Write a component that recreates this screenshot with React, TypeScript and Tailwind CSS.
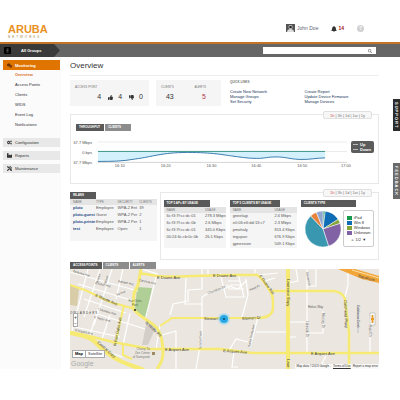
import { FaBell, FaCogs, FaComments, FaIndustry, FaSearch, FaThumbsDown, FaThumbsUp, FaTools } from 'react-icons/fa';

const mainLinks = ['Overview', 'Access Points', 'Clients', 'WIDS', 'Event Log', 'Notifications'];

const sections = [
  { name: 'Configuration', icon: <FaCogs size={5} /> },
  { name: 'Reports', icon: <FaIndustry size={5} /> },
  { name: 'Maintenance', icon: <FaTools size={5} /> },
];

const quickLinks = [
  ['Create New Network', 'Manage Groups', 'Set Security'],
  ['Create Report', 'Update Device Firmware', 'Manage Devices'],
];

const wlans = [
  ['pluto', 'Employee', 'WPA-2 Ent', '39'],
  ['pluto-guest', 'Guest', 'WPA-2 Per', '2'],
  ['pluto-printe', 'Employee', 'WPA-2 Per', '1'],
  ['test', 'Employee', 'Open', '1'],
];

const topAps = [
  ['6c:f3:7f:cc:dc:01', '278.3 Mbps'],
  ['6c:f3:7f:cc:dc:0b', '2.6 Mbps'],
  ['6c:f3:7f:cc:dc:01', '345.0 Kbps'],
  ['00:24:6c:cb:0c:0b', '26.1 Kbps'],
];

const topClients = [
  ['gneelagi', '2.6 Mbps'],
  ['e0:06:e6:dd:13:c7', '2.3 Mbps'],
  ['pmohaly', '813.4 Kbps'],
  ['tngupari', '676.9 Kbps'],
  ['gpnession', '509.1 Kbps'],
];

const slices = [
  { color: '#2f9d68', value: 2 },
  { color: '#0f6db5', value: 14 },
  { color: '#86a53c', value: 4 },
  { color: '#8162a5', value: 25 },
  { color: '#3a97b0', value: 43 },
  { color: '#e8823a', value: 6 },
  { color: '#8fa6cf', value: 6 },
];

const legend = [
  { name: 'iPad', swatch: 'bg-[#159a50]' },
  { name: 'Win 8', swatch: 'bg-[#0f6db5]' },
  { name: 'Windows', swatch: 'bg-[#86a53c]' },
  { name: 'Unknown', swatch: 'bg-[#8162a5]' },
];

function RangePicker() {
  return (
    <div className="absolute -top-1 right-1.5 flex h-2 items-center gap-px rounded-xs border border-[#e0e0e0] bg-[#f7f7f7] px-1.5 leading-[5px] text-[#777]">
      <button className="text-[#c55]">1h</button>|<button>3h</button>|<button>1d</button>|<button>1w</button>|<button>1y</button>
    </div>
  );
}

function Tabs({ items }: { items: string[] }) {
  return (
    <div className="flex gap-px text-[3px] leading-[7px] font-bold text-white">
      {items.map((item, i) => (
        <button key={item} className={`h-[7px] min-w-[26px] pr-1 pl-[3px] text-left ${i === 0 ? 'bg-[#595959]' : 'bg-[#8c8c8c]'}`}>
          {item}
        </button>
      ))}
    </div>
  );
}

function UsageTable({ title, rows }: { title: string; rows: string[][] }) {
  return (
    <div className="min-w-0 bg-[#f5f5f5]">
      <div className="bg-white">
        <h3 className="h-[7px] w-3/4 bg-[#595959] pl-[3px] text-[3px] leading-[7px] font-bold whitespace-nowrap text-white">{title}</h3>
      </div>
      <table className="w-full table-fixed text-left leading-[6px] whitespace-nowrap text-[#555]">
        <thead className="bg-[#e4e4e4] text-[3px] text-[#777]">
          <tr>
            <th className="w-2/3 pl-[3px] font-normal">NAME</th>
            <th className="font-normal">USAGE</th>
          </tr>
        </thead>
        <tbody>
          {rows.map((row, i) => (
            <tr key={i} className="h-[7px]">
              <td className="pl-[3px]">{row[0]}</td>
              <td>{row[1]}</td>
            </tr>
          ))}
        </tbody>
      </table>
    </div>
  );
}

function Throughput() {
  return (
    <svg viewBox="0 0 280 34" className="block min-w-0 flex-1" fontFamily="Liberation Sans" fontSize="4" fill="#555">
      <path d="M26 6H276M26 15.500H276" stroke="#e6e6e6" strokeWidth="0.8" />
      <path d="M26 26.500H276" stroke="#ccc" strokeWidth="0.8" />
      <path d="M26 15.500H254V22C245 22 238 24 228 23.500S214 21 205 21S194 22.500 185 22.500S168 21 160 20S128 16.500 116 16.500C90 16.500 80 21 64 23C50 25.500 40 25.500 26 25.500Z" fill="#d3f1fc" />
      <path d="M26 25.500C40 25.500 50 25.500 64 23C80 21 90 16.500 116 16.500S152 19 160 20S176 22.500 185 22.500S196 21 205 21S218 23 228 23.500S245 22 254 22" fill="none" stroke="#2b70a4" strokeWidth="0.9" />
      <path d="M26 15.500H254" stroke="#2f8d7d" strokeWidth="0.9" />
      <g textAnchor="end">
        <text x="20" y="8">67.7 Mbps</text>
        <text x="20" y="18">0 bps</text>
        <text x="20" y="28">67.7 Mbps</text>
      </g>
      <g textAnchor="middle">
        <text x="48" y="31">16:10</text>
        <text x="94" y="31">16:20</text>
        <text x="140" y="31">16:30</text>
        <text x="185" y="31">16:40</text>
        <text x="231" y="31">16:50</text>
        <text x="275" y="31">17:00</text>
      </g>
    </svg>
  );
}

function Pie() {
  let start = 0;
  return (
    <svg viewBox="-19 -19 38 38" className="size-[38px] shrink-0">
      {slices.map((s, i) => {
        const a = (start / 100) * Math.PI * 2;
        start += s.value;
        const b = (start / 100) * Math.PI * 2;
        const d = `M0 0L${18 * Math.sin(a)} ${-18 * Math.cos(a)}A18 18 0 0 1 ${18 * Math.sin(b)} ${-18 * Math.cos(b)}Z`;
        return <path key={i} d={d} fill={s.color} stroke="#fff" strokeWidth="0.5" />;
      })}
    </svg>
  );
}

function StreetMap() {
  return (
    <svg viewBox="0 0 309 100" className="block w-full bg-[#ebe7e0]" fontFamily="Liberation Sans" fontSize="3" fill="#555">
      <path d="M0 16L9 20L7 37L0 36Z" fill="#d8cda6" />
      <path d="M67 18L82 19L77 46L75 51L65 41Z" fill="#b0cf96" />
      <path d="M77 51L86 58L78 76H72Z" fill="#d3cec7" />
      {/* side streets */}
      <g fill="none" stroke="#fff" strokeWidth="1.2">
        <path d="M0 3L68 22M8 15L64 32M14 30L56 44M18 42L75 60M5 58L50 68M18 0L2 62M30 0L14 48M42 0L24 56M53 0L46 30M28 40L20 66M40 46L32 70M60 44L53 76" />
        <path d="M72 0L87 5L75 51M90 56L86 80M100 46L103 35L118 32V21L132 20V0M116 8L115 35H132V28L142 22L160 18M132 28V66L126 100M138 8V0M92 66L106 62M106 62V100M53 88L40 84" />
        <path d="M156 16L168 20L176 12M150 4L156 28H174L168 5M158 12H170M160 16H172M158 20H174M176 10L178 26L172 48M188 6L208 4M195 12L205 9M185 0V4M188 48L180 78M186 63H219M160 80L166 70L178 73M164 82L162 98H168" />
        <path d="M219 53H237M219 68H226M237 0V83M237 17H246V0M237 64H253V42M218 14L228 12L226 0M275 28L278 16V0M300 48V83M256 87L250 98" />
      </g>
      <path d="M288 36V64" stroke="#b9bfd0" strokeWidth="1" />
      {/* main roads */}
      <g fill="none" stroke="#f6ea72">
        <path d="M71 0L68 16L64 24L63 39C66 46 80 52 87 59C92 66 93 74 93 84C93 90 90 96 87 100" strokeWidth="3" />
        <path d="M69 4L87 7C110 9 135 6 160 6L187 6C192 8 196 16 200 22C203 26 203 30 203 38C203 46 198 48 190 49" strokeWidth="2.500" />
        <path d="M202 22H263C269 22 274 26 275 30L279 63V100" strokeWidth="2.500" />
        <path d="M190 49L150 49L102 49L90 57" strokeWidth="2" />
        <path d="M0 16L15 21L40 33L58 38L64 40M54 36L45 76M53 76V86L62 90" strokeWidth="2" />
        <path d="M0 63L23 68L43 73L80 80L150 80L183 84H309" strokeWidth="2.500" />
        <path d="M218 0V100" strokeWidth="4" />
        <path d="M0 64C14 67 22 68 28 76C36 84 48 92 60 96L74 101" strokeWidth="4" />
      </g>
      <path d="M268 0H285L309 7V14L292 10Z" fill="#f2a63a" />
      <path d="M282 1L309 9" stroke="#fbe0a8" strokeWidth="1" />
      <g fill="#444" fontSize="4">
        <text transform="translate(25 27) rotate(24)">E Maude Ave</text>
        <text transform="translate(46 77) rotate(-79)">N Fair Oaks Ave</text>
        <text transform="translate(75 54) rotate(43)">N Wolfe Rd</text>
        <text transform="translate(27 74) rotate(41)">Central Expy</text>
        <text x="87" y="10">E Duane Ave</text>
        <text x="143" y="8">E Duane Ave</text>
        <text transform="translate(189 7) rotate(54)">E Duane Ave</text>
        <text x="134" y="51">Stewart Dr</text>
        <text transform="translate(172 51) rotate(-4)">Stewart Dr</text>
        <text x="95" y="82">E Arques Ave</text>
        <text transform="translate(153 83) rotate(4)">E Arques Ave</text>
        <text x="241" y="86">E Arques Ave</text>
        <text transform="translate(217 10) rotate(90)">Lawrence Expy</text>
        <text transform="translate(217 90) rotate(90)">Lawr</text>
        <text transform="translate(274 31) rotate(88)">Oakmead Pkwy</text>
        <text transform="translate(288 8) rotate(15)">Bayshore</text>
        <text x="0" y="45" fontSize="3" letterSpacing="1">OWLANDERS</text>
      </g>
      <g fill="#555">
        <text transform="translate(3 3) rotate(16)">Bellevue Ave</text>
        <text transform="translate(25 15) rotate(12)">E Arbor Ave</text>
        <text transform="translate(28 41) rotate(16)">Columbia Ave</text>
        <text transform="translate(24 49) rotate(14)">E Taylor Ave</text>
        <text transform="translate(5 62) rotate(12)">E Arques Ave</text>
        <text transform="translate(48 13) rotate(12)">Balsam Ave</text>
        <text transform="translate(69 12) rotate(12)">Carolina Ave</text>
        <text transform="translate(47 27) rotate(-24)">Fir Ave</text>
        <text transform="translate(28 14) rotate(-74)">Worley</text>
        <text transform="translate(36 15) rotate(-74)">Morse</text>
        <text transform="translate(138 25) rotate(-20)">Champlain Dr</text>
        <text transform="translate(180 22) rotate(-24)">Reed Pl</text>
        <text transform="translate(131 80) rotate(-88)">Sonora Court</text>
        <text transform="translate(180 78) rotate(-78)">Santa Trinita Ave</text>
        <text x="238" y="39">Helius Way</text>
        <text transform="translate(236 52) rotate(90)">Lakeside Dr</text>
        <text transform="translate(252 44) rotate(90)">Mercury Dr</text>
        <text transform="translate(236 3) rotate(80)">Stewart Dr</text>
        <text transform="translate(287 36) rotate(90)">Calabazas Creek</text>
        <text transform="translate(299 56) rotate(90)">Hazel Dr</text>
        <g fill="#4d6b45" textAnchor="middle">
          <text x="65" y="33">Fair Oaks</text>
          <text x="65" y="37">Park</text>
        </g>
        <g fill="#777" textAnchor="end">
          <text x="80" y="81">Chung Tai</text>
          <text x="80" y="85">Zen Center</text>
          <text x="80" y="89">of Sunnyvale</text>
        </g>
      </g>
      <circle cx="65" cy="41" r="1" fill="#222" />
      <path d="M82 83h3v3h-3z" fill="#a08a60" />
      <circle cx="154" cy="50" r="6" fill="#8cd5f5" opacity="0.6" />
      <circle cx="154" cy="50" r="4" fill="#27a8e5" />
      <circle cx="154" cy="50" r="1" fill="#0b4a6e" />
      <path d="M300 44h5v12h-5z" fill="#fff" stroke="#999" strokeWidth="0.5" />
      <path d="M302.500 46v3M301 50h3M302.500 50v4" stroke="#e59b23" strokeWidth="1.800" />
    </svg>
  );
}

export default function App() {
  return (
    <div className="relative bg-white pb-7 font-['Liberation_Sans',Arial,sans-serif] text-[4px] leading-[5px] text-[#333]">
      <header className="flex h-[42px] items-start justify-between pt-6 pr-9 pl-2">
        <div>
          <div className="text-[11px] leading-[11px] font-bold text-[#e8921f]">ARUBA</div>
          <div className="text-[3px] leading-[4px] tracking-[2px] text-[#a8793c]">NETWORKS</div>
        </div>
        <div className="flex items-center gap-[13px]">
          <span className="flex items-center gap-0.5 text-[5px] text-[#667]">
            <svg viewBox="0 0 9 9" className="size-[9px]">
              <path d="M0 0h9v8H0z" fill="#555" />
              <circle cx="4.5" cy="3" r="2" fill="#ddd" />
              <path d="M1 8c0-4 7-4 7 0z" fill="#ddd" />
              <circle cx="4.5" cy="3" r="1.300" fill="#222" />
            </svg>
            John Doe
          </span>
          <span className="flex items-center gap-px text-[5px] font-bold text-[#a01515]"><FaBell size={6} color="#333" />14</span>
          <button aria-label="Help" className="size-[7px] rounded-full bg-[#d0d0d0] text-[5px] leading-[7px] font-bold text-white">?</button>
        </div>
      </header>

      <div className="flex h-[15px] items-center justify-between border-t-2 border-[#c47425] bg-[#666] pr-6">
        <button className="flex h-full w-[60px] items-center gap-2.5 bg-[#3a3a3a] pl-1 font-bold text-white [clip-path:polygon(0_0,90%_0,100%_50%,90%_100%,0_100%)]">
          <svg viewBox="0 0 7 7" className="size-[7px]">
            <rect width="7" height="7" rx="1" fill="#000" />
            <path d="M2.500 2h2M2.500 3.500h2M2.500 5h2" stroke="#999" strokeWidth="0.6" />
          </svg>
          All Groups
        </button>
        <div className="flex h-[7px] w-[30%] items-center bg-white pr-1">
          <input aria-label="Search" className="h-full min-w-0 flex-1 outline-none" />
          <FaSearch size={4} color="#777" />
        </div>
      </div>

      <div className="flex">
        <nav className="w-[61px] shrink-0 bg-[#fbfbfb] pt-[3px] pr-px pl-[3px]">
          <a href="#" className="flex h-[10px] items-center gap-[3px] bg-[#df7400] pl-1 font-bold text-white"><FaComments size={5} color="#6b3300" />Monitoring</a>
          <ul className="mb-2">
            {mainLinks.map((link, i) => (
              <li key={link} className="h-[10px] pl-3 leading-[10px]"><a href="#" className={i === 0 ? 'font-bold text-[#d9702c]' : ''}>{link}</a></li>
            ))}
          </ul>
          {sections.map((s) => (
            <a key={s.name} href="#" className="mb-1 flex h-[9px] items-center gap-[3px] bg-[#e8e8e8] pl-1">{s.icon}{s.name}</a>
          ))}
        </nav>

        <main className="min-w-0 flex-1 pr-[21px] pl-[9px]">
          <h1 className="mt-[3px] h-4 border-b border-[#eee] text-[8px] leading-[11px] text-[#333]">Overview</h1>

          <section className="mt-1 flex h-[26px]">
            <div className="w-[79px] bg-[#f5f5f5] px-[5px] pt-[5px]">
              <div className="text-[3px] leading-[5px] text-[#777]">ACCESS POINT</div>
              <div className="flex items-center justify-end gap-[7px] pt-[3px] pr-px text-[7px] leading-[8px]">
                <span>4</span>
                <span className="flex items-center gap-[5px]"><FaThumbsUp size={5} />4</span>
                <span className="flex items-center gap-[5px]"><FaThumbsDown size={5} />0</span>
              </div>
            </div>
            <div className="ml-[7px] flex w-[65px] justify-between bg-[#f5f5f5] pt-[5px] pr-[15px] pl-[5px]">
              <div>
                <div className="text-[3px] leading-[5px] text-[#777]">CLIENTS</div>
                <div className="pt-[3px] text-right text-[7px] leading-[8px]">43</div>
              </div>
              <div>
                <div className="text-[3px] leading-[5px] text-[#777]">ALERTS</div>
                <div className="pt-[3px] text-right text-[7px] leading-[8px] text-[#b23a4a]">5</div>
              </div>
            </div>
            <div className="ml-[9px] flex-1">
              <div className="text-[3px] leading-[5px] font-bold text-[#777]">QUICK LINKS</div>
              <div className="grid grid-cols-2 pt-1">
                {quickLinks.map((col) => (
                  <ul key={col[0]}>
                    {col.map((link) => <li key={link}><a href="#" className="text-[#14335a]">{link}</a></li>)}
                  </ul>
                ))}
              </div>
            </div>
          </section>

          <section className="relative mt-2 border border-[#e8e8e8] px-px pt-[9px] pb-[13px]">
            <RangePicker />
            <div className="pl-1"><Tabs items={['THROUGHPUT', 'CLIENTS']} /></div>
            <div className="flex items-start pt-[5px] pr-[3px]">
              <Throughput />
              <div className="mt-[5px] w-[23px] rounded-xs bg-[#5c5c5c] py-px pl-0.5 font-bold text-white">
                <div className="flex items-center gap-0.5"><span className="h-px w-[5px] bg-[#bbb]" />Up</div>
                <div className="flex items-center gap-0.5"><span className="h-px w-[5px] bg-[#bbb]" />Down</div>
              </div>
            </div>
          </section>

          <div className="mt-2 flex items-start gap-[3px]">
            <section className="w-[28%] shrink-0 bg-[#f5f5f5] pb-2">
              <div className="bg-white"><Tabs items={['WLANS']} /></div>
              <table className="w-full table-fixed text-left leading-[6px] whitespace-nowrap text-[#555]">
                <thead className="bg-[#e4e4e4] text-[3px] text-[#777]">
                  <tr>
                    <th className="w-[30%] pl-[3px] font-normal">NAME</th>
                    <th className="w-1/4 font-normal">TYPE</th>
                    <th className="w-1/4 font-normal">SECURITY</th>
                    <th className="font-normal">CLIENTS</th>
                  </tr>
                </thead>
                <tbody>
                  {wlans.map((row) => (
                    <tr key={row[0]} className="h-[7px]">
                      <td className="pl-[3px]"><a href="#" className="font-bold text-[#1d4a86]">{row[0]}</a></td>
                      <td>{row[1]}</td>
                      <td>{row[2]}</td>
                      <td>{row[3]}</td>
                    </tr>
                  ))}
                </tbody>
              </table>
            </section>

            <section className="relative grid flex-1 grid-cols-[62fr_67fr_74fr] gap-1 border border-[#e8e8e8] px-[3px] pt-[7px] pb-[11px]">
              <RangePicker />
              <UsageTable title="TOP 5 APs BY USAGE" rows={topAps} />
              <UsageTable title="TOP 5 CLIENTS BY USAGE" rows={topClients} />
              <div className="min-w-0">
                <h3 className="h-[7px] w-3/4 bg-[#595959] pl-[3px] text-[3px] leading-[7px] font-bold text-white">CLIENTS TYPE</h3>
                <div className="flex items-center gap-px pt-[3px] pl-[3px]">
                  <Pie />
                  <div className="w-[31px] rounded-xs border border-[#ccc] px-[3px] py-1">
                    {legend.map((l) => (
                      <div key={l.name} className="flex items-center gap-0.5"><span className={`h-1 w-[5px] shrink-0 ${l.swatch}`} />{l.name}</div>
                    ))}
                    <div className="pt-0.5 text-center"><span className="text-[#aaa]">▲</span> 1/2 ▼</div>
                  </div>
                </div>
              </div>
            </section>
          </div>

          <section className="mt-0.5">
            <Tabs items={['ACCESS POINTS', 'CLIENTS', 'ALERTS']} />
            <div className="relative">
              <StreetMap />
              <div className="absolute top-11 left-[3px] flex w-[5px] flex-col border border-[#aaa] bg-white text-center text-[5px] leading-[6px]">
                <button aria-label="Zoom in">+</button>
                <button aria-label="Zoom out">−</button>
              </div>
              <div className="absolute bottom-[11px] left-0.5 flex border border-[#aaa] bg-white leading-[6px]">
                <button className="border-r border-[#aaa] px-0.5 font-bold text-black">Map</button>
                <button className="px-0.5">Satellite</button>
              </div>
              <div className="absolute bottom-px left-px text-[7px] leading-[8px] text-[#aaa]">Google</div>
              <div className="absolute right-0 bottom-0 flex gap-0.5 bg-white/70 px-px text-[3px] leading-[5px]">
                <span>Map data ©2013 Google -</span>
                <a href="#" className="underline">Terms of Use</a>
                <a href="#">Report a map error</a>
              </div>
            </div>
          </section>
        </main>
      </div>

      <button className="absolute top-[99px] right-0 flex h-8 w-[7px] items-center justify-center bg-[#2b2b2b] font-bold tracking-[1px] text-white [writing-mode:vertical-rl]">SUPPORT</button>
      <button className="absolute top-[163px] right-0 flex h-9 w-[7px] items-center justify-center bg-[#6a6a6a] font-bold tracking-[1px] text-white [writing-mode:vertical-rl]">FEEDBACK</button>
    </div>
  );
}
